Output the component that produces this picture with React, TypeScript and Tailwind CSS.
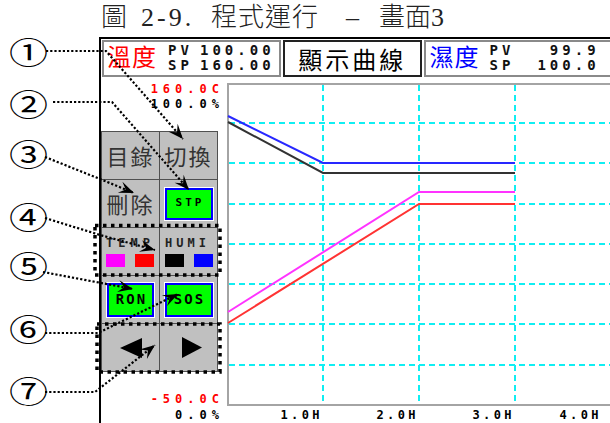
import React from "react";

const mono = "font-['DejaVu_Sans_Mono',monospace] font-bold";
const cjk = "font-['Noto_Sans_CJK_TC','Noto_Sans_CJK_SC',sans-serif]";

type Pt = [number, number];

const leaders: { label: string; cy: number; pts: Pt[] }[] = [
  { label: "①", cy: 52, pts: [[46, 51], [106, 51], [183, 139]] },
  { label: "②", cy: 104, pts: [[53, 102], [112, 102], [189, 190]] },
  { label: "③", cy: 154, pts: [[45, 157], [100, 179], [134, 193]] },
  { label: "④", cy: 217, pts: [[45, 218], [100, 235], [155, 250]] },
  { label: "⑤", cy: 266, pts: [[43, 272], [133, 289]] },
  { label: "⑥", cy: 329, pts: [[45, 333], [98, 333], [178, 294]] },
  { label: "⑦", cy: 391, pts: [[45, 392], [95, 392], [155, 345]] },
];

const arrowHead = (from: Pt, tip: Pt) => {
  const a = Math.atan2(tip[1] - from[1], tip[0] - from[0]);
  const c = Math.cos(a);
  const s = Math.sin(a);
  const L = 15;
  const W = 6;
  const N = 9;
  const pts: Pt[] = [
    tip,
    [tip[0] - L * c + W * s, tip[1] - L * s - W * c],
    [tip[0] - N * c, tip[1] - N * s],
    [tip[0] - L * c - W * s, tip[1] - L * s + W * c],
  ];
  return pts.map((p) => p.join(",")).join(" ");
};

const GreenButton = ({ text, w, h, size }: { text: string; w: string; h: string; size: string }) => (
  <div className={`${w} ${h} flex items-center justify-center bg-[#00ff00] border-2 border-[#0000ff] ring-1 ring-white`}>
    <span className={`${mono} ${size} text-black`}>{text}</span>
  </div>
);

const Chart = () => {
  const hGrid = [40, 80, 121, 161, 201, 241, 282];
  const vGrid = [96, 192, 288, 384];
  return (
    <svg width="390" height="324" className="block">
      {hGrid.map((y) => (
        <line key={"h" + y} x1="2" x2="390" y1={y} y2={y} stroke="#10eef2" strokeWidth="2" strokeDasharray="6 4" />
      ))}
      {vGrid.map((x) => (
        <line key={"v" + x} x1={x} x2={x} y1="2" y2="321" stroke="#10eef2" strokeWidth="2" strokeDasharray="6 4" />
      ))}
      <path d="M390 1 H1 V322 H390" fill="none" stroke="#a4a4a4" strokeWidth="2" />
      <polyline points="1,33 96,80 288,80" fill="none" stroke="#2828ff" strokeWidth="2" />
      <polyline points="1,39 96,90 288,90" fill="none" stroke="#333333" strokeWidth="2" />
      <polyline points="1,229 192,109 288,109" fill="none" stroke="#ff33ff" strokeWidth="2" />
      <polyline points="1,240 192,121 288,121" fill="none" stroke="#ff3333" strokeWidth="2" />
    </svg>
  );
};

export default function App() {
  return (
    <div className="relative w-[610px] h-[423px] overflow-hidden bg-white">
      {/* caption */}
      <div className={`flex h-[37px] pt-[5px] pl-[101px] text-[26px] leading-[26px] font-light text-[#222] font-['Liberation_Serif','Noto_Sans_CJK_TC',serif]`}>
        <span className="w-[40px]">圖</span>
        <span className="w-[70px] tracking-[3px]">2-9.</span>
        <span className="w-[135px] tracking-[1px]">程式運行</span>
        <span className="w-[33px]">–</span>
        <span>畫面3</span>
      </div>

      {/* HMI screen */}
      <div className="ml-[99px] w-[520px] h-[386px] border-l-2 border-t-2 border-black">
        <div className="flex gap-[2px] pl-px pt-px">
          <div className="flex h-[37px] w-[183px] border-2 border-[#8a8a8a]">
            <span className={`${cjk} ml-[3px] mt-[2px] w-[61px] text-[24px] leading-[24px] tracking-[1px] text-[#ff0000]`}>溫度</span>
            <div className={`${mono} pt-px text-[14px] leading-[15px] tracking-[4px] text-[#111]`}>
              <div className="flex"><span className="w-[32px]">PV</span><span>100.00</span></div>
              <div className="flex"><span className="w-[32px]">SP</span><span>160.00</span></div>
            </div>
          </div>
          <div className="flex h-[37px] w-[142px] items-center justify-center border-2 border-[#222]">
            <span className={`${cjk} text-[24px] leading-[24px] tracking-[3px] text-black`}>顯示曲線</span>
          </div>
          <div className="flex h-[37px] w-[200px] border-2 border-[#8a8a8a]">
            <span className={`${cjk} ml-[4px] mt-[2px] w-[60px] text-[24px] leading-[24px] tracking-[1px] text-[#0000ff]`}>濕度</span>
            <div className={`${mono} w-[110px] pt-px text-[14px] leading-[15px] tracking-[4px] text-[#111]`}>
              <div className="flex justify-between"><span>PV</span><span>99.9</span></div>
              <div className="flex justify-between"><span>SP</span><span>100.0</span></div>
            </div>
          </div>
        </div>

        <div className="mt-px flex">
          {/* left panel */}
          <div className="flex w-[126px] flex-col">
            <div className={`${mono} h-[53px] pt-[4px] pr-[3px] text-right text-[12px] leading-[15px] tracking-[5px]`}>
              <div className="text-[#ff0000]">160.0C</div>
              <div className="text-black">100.0%</div>
            </div>
            <div className="grid w-[117px] grid-cols-[57px_57px] grid-rows-[repeat(5,47px)] gap-px bg-[#505050] p-px">
              <div className={`${cjk} flex items-center justify-center bg-[#c0c0c0] text-[22px] tracking-[2px] text-[#333]`}>目錄</div>
              <div className={`${cjk} flex items-center justify-center bg-[#c0c0c0] text-[22px] tracking-[2px] text-[#333]`}>切換</div>
              <div className={`${cjk} flex items-center justify-center bg-[#c0c0c0] text-[22px] tracking-[2px] text-[#333]`}>刪除</div>
              <div className="flex items-center justify-center bg-[#c0c0c0]">
                <GreenButton text="STP" w="w-[48px]" h="h-[32px]" size="text-[11px] tracking-[3px] pl-[3px]" />
              </div>
              <div className={`${mono} flex flex-col bg-[#c0c0c0] pl-[4px] pt-[8px]`}>
                <span className="text-[12px] leading-[14px] tracking-[5px] text-[#222]">TEMP</span>
                <div className="mt-[4px] flex gap-[10px]">
                  <div className="h-[13px] w-[19px] bg-[#ff00ff]" />
                  <div className="h-[13px] w-[19px] bg-[#ff0000]" />
                </div>
              </div>
              <div className={`${mono} flex flex-col bg-[#c0c0c0] pl-[5px] pt-[8px]`}>
                <span className="text-[12px] leading-[14px] tracking-[4px] text-[#222]">HUMI</span>
                <div className="mt-[4px] flex gap-[10px]">
                  <div className="h-[13px] w-[19px] bg-black" />
                  <div className="h-[13px] w-[19px] bg-[#0000ff]" />
                </div>
              </div>
              <div className="flex items-center justify-center bg-[#c0c0c0]">
                <GreenButton text="RON" w="w-[47px]" h="h-[34px]" size="text-[14px] tracking-[2px] pl-[2px]" />
              </div>
              <div className="flex items-center justify-center bg-[#c0c0c0]">
                <GreenButton text="SOS" w="w-[48px]" h="h-[34px]" size="text-[14px] tracking-[2px] pl-[2px]" />
              </div>
              <div className="flex items-center justify-center bg-[#c0c0c0]">
                <svg width="22" height="20"><polygon points="0,10 22,0 22,20" fill="#000" /></svg>
              </div>
              <div className="flex items-center justify-center bg-[#c0c0c0] pl-[6px]">
                <svg width="20" height="21"><polygon points="0,0 20,10.5 0,21" fill="#000" /></svg>
              </div>
            </div>
            <div className={`${mono} mt-[19px] pr-[3px] text-right text-[12px] leading-[16px] tracking-[5px]`}>
              <div className="text-[#ff0000]">-50.0C</div>
              <div className="text-black">0.0%</div>
            </div>
          </div>

          {/* trend chart */}
          <div className="mt-[5px] flex flex-col">
            <Chart />
            <div className={`${mono} mt-px flex text-right text-[12px] leading-[14px] tracking-[3.4px] text-black`}>
              <span className="w-[96px]">1.0H</span>
              <span className="w-[96px]">2.0H</span>
              <span className="w-[96px]">3.0H</span>
              <span className="w-[87px]">4.0H</span>
            </div>
          </div>
        </div>
      </div>

      {/* callout numbers */}
      {leaders.map((l) => (
        <span
          key={l.label}
          className={`${cjk} absolute left-[9px] text-[39px] leading-[39px] text-black scale-y-[0.78]`}
          style={{ top: l.cy - 20 }}
        >
          {l.label}
        </span>
      ))}

      {/* leader lines */}
      <svg className="pointer-events-none absolute inset-0" width="610" height="423">
        <rect x="95" y="225.5" width="125" height="49.5" fill="none" stroke="#000" strokeWidth="3.5" strokeDasharray="3.5 4.5" />
        <rect x="97" y="324" width="123" height="48" fill="none" stroke="#000" strokeWidth="3.5" strokeDasharray="3.5 4.5" />
        {leaders.map((l) => {
          const n = l.pts.length;
          return (
            <g key={l.label}>
              <polyline
                points={l.pts.map((p) => p.join(",")).join(" ")}
                fill="none"
                stroke="#000"
                strokeWidth="2.2"
                strokeDasharray="2.2 2"
              />
              <polygon points={arrowHead(l.pts[n - 2], l.pts[n - 1])} fill="#000" />
            </g>
          );
        })}
      </svg>
    </div>
  );
}
